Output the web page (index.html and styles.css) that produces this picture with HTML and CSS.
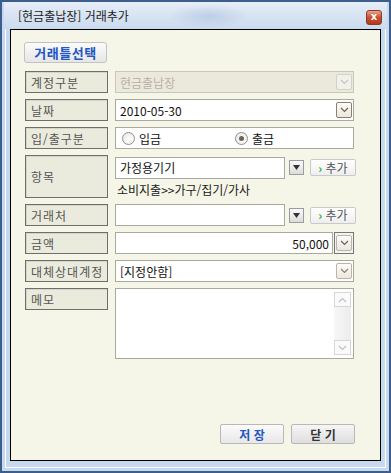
FILE: index.html
```
<!DOCTYPE html>
<html lang="ko">
<head>
    <meta charset="UTF-8">
    <title>거래추가</title>
    <link rel="stylesheet" href="styles.css">
</head>
<body>
    <div class="window">
        <div class="titlebar">
            <span class="title">[현금출납장] 거래추가</span>
            <span class="close">x</span>
        </div>
        <div class="client">
            <div class="top">
                <button class="btn-template">거래틀선택</button>
            </div>
            <div class="form">
                <div class="row">
                    <div class="label">계정구분</div>
                    <div class="field disabled">
                        <span class="value">현금출납장</span>
                        <span class="arrow light"><svg width="9" height="6" viewBox="0 0 9 6"><path d="M1 1 L4.5 4.5 L8 1" fill="none" stroke="#c4c4c4" stroke-width="1.2"/></svg></span>
                    </div>
                </div>
                <div class="row">
                    <div class="label">날짜</div>
                    <div class="field">
                        <span class="value">2010-05-30</span>
                        <span class="arrow dark"><svg width="9" height="6" viewBox="0 0 9 6"><path d="M1 1 L4.5 4.5 L8 1" fill="none" stroke="#6b6158" stroke-width="1.2"/></svg></span>
                    </div>
                </div>
                <div class="row">
                    <div class="label">입/출구분</div>
                    <div class="field radios">
                        <label class="radio"><span class="dot"></span>입금</label>
                        <label class="radio checked"><span class="dot"></span>출금</label>
                    </div>
                </div>
                <div class="row tall">
                    <div class="label center">항목</div>
                    <div class="stack">
                        <div class="line">
                            <div class="field short"><span class="value">가정용기기</span></div>
                            <span class="drop"><svg width="7" height="5" viewBox="0 0 7 5"><path d="M0 0 H7 L3.5 5 Z" fill="#333"/></svg></span>
                            <button class="btn-add"><span class="go">›</span> 추가</button>
                        </div>
                        <div class="path">소비지출&gt;&gt;가구/집기/가사</div>
                    </div>
                </div>
                <div class="row">
                    <div class="label">거래처</div>
                    <div class="line">
                        <div class="field short"></div>
                        <span class="drop"><svg width="7" height="5" viewBox="0 0 7 5"><path d="M0 0 H7 L3.5 5 Z" fill="#333"/></svg></span>
                        <button class="btn-add"><span class="go">›</span> 추가</button>
                    </div>
                </div>
                <div class="row">
                    <div class="label">금액</div>
                    <div class="line tight">
                        <div class="field amount"><span class="value">50,000</span></div>
                        <span class="calc"><span class="arrow light"><svg width="9" height="6" viewBox="0 0 9 6"><path d="M1 1 L4.5 4.5 L8 1" fill="none" stroke="#6b6158" stroke-width="1.2"/></svg></span></span>
                    </div>
                </div>
                <div class="row">
                    <div class="label">대체상대계정</div>
                    <div class="field">
                        <span class="value">[지정안함]</span>
                        <span class="arrow light"><svg width="9" height="6" viewBox="0 0 9 6"><path d="M1 1 L4.5 4.5 L8 1" fill="none" stroke="#8a8078" stroke-width="1.2"/></svg></span>
                    </div>
                </div>
                <div class="row memo">
                    <div class="label">메모</div>
                    <div class="field textarea">
                        <div class="scrollbar">
                            <span class="sb-btn"><svg width="9" height="6" viewBox="0 0 9 6"><path d="M1 5 L4.5 1.5 L8 5" fill="none" stroke="#c0c0c0" stroke-width="1.2"/></svg></span>
                            <span class="sb-btn"><svg width="9" height="6" viewBox="0 0 9 6"><path d="M1 1 L4.5 4.5 L8 1" fill="none" stroke="#c0c0c0" stroke-width="1.2"/></svg></span>
                        </div>
                    </div>
                </div>
            </div>
            <div class="actions">
                <button class="btn save">저 장</button>
                <button class="btn">닫 기</button>
            </div>
        </div>
    </div>
</body>
</html>
```
FILE: styles.css
```
body {
    margin: 0;
    font-family: "Noto Sans CJK KR", "Noto Sans", sans-serif;
    font-size: 12px;
    color: #111;
}
.window {
    box-sizing: border-box;
    width: 391px;
    height: 473px;
    display: flex;
    flex-direction: column;
    border: 2px solid #3d5d8d;
    padding: 0 8px 10px 8px;
    background: #c6d9ef;
    box-shadow: inset 0 0 0 3px #c6d9ef, inset 0 0 0 4px #fbfdff;
}
.titlebar {
    height: 27px;
    display: flex;
    align-items: center;
    margin: 0 -6px;
    padding: 0 5px 0 14px;
    background:
        radial-gradient(ellipse 40px 12px at 205px 14px, rgba(140, 165, 205, 0.35), transparent),
        linear-gradient(to bottom, #e6eef8, #cadaee);
}
.title {
    color: #1b1b1b;
    font-size: 12px;
}
.close {
    margin-left: auto;
    margin-top: 3px;
    width: 14px;
    height: 13px;
    border: 1px solid #8a3a2a;
    border-radius: 3px;
    background: linear-gradient(to bottom, #eba08a, #c9502f 50%, #b4391c);
    color: #fff;
    font: bold 10px/12px "DejaVu Sans", sans-serif;
    text-align: center;
}
.client {
    flex: 1;
    display: flex;
    flex-direction: column;
    border: 1px solid #000;
    background: #f5f6e7;
    padding: 12px 26px 16px 14px;
}
.top {
    margin-left: -1px;
}
.btn-template {
    height: 21px;
    width: 83px;
    padding: 0;
    border: 1px solid #c2c2c2;
    border-radius: 3px;
    background: linear-gradient(to bottom, #fbfbfb, #e6e6e6);
    color: #2356c4;
    font: bold 13px "Noto Sans CJK KR", sans-serif;
    letter-spacing: 0.5px;
}
.form {
    display: flex;
    flex-direction: column;
    gap: 6px;
    margin-top: 8px;
}
.row {
    display: flex;
    gap: 7px;
    height: 22px;
}
.row.tall {
    height: 43px;
}
.row.memo {
    height: 71px;
}
.label {
    box-sizing: border-box;
    width: 83px;
    height: 22px;
    flex-shrink: 0;
    display: flex;
    align-items: center;
    padding-left: 5px;
    border: 1px solid #6e6e6e;
    background: #ebebdd;
    box-shadow: inset 1px 1px 0 #d6d6c8;
    color: #555;
    letter-spacing: 1px;
}
.tall .label {
    height: 43px;
}
.field {
    box-sizing: border-box;
    flex: 1;
    height: 22px;
    display: flex;
    align-items: center;
    padding: 0 1px 0 4px;
    border: 1px solid #a9a99d;
    background: #fff;
}
.field.disabled {
    background: #ebe9dc;
    border-color: #c8c6b6;
    color: #b9b0a8;
}
.value {
    flex: 1;
}
.arrow {
    box-sizing: border-box;
    width: 16px;
    height: 16px;
    display: flex;
    align-items: center;
    justify-content: center;
    border: 1px solid #b9b5ad;
    border-radius: 2px;
    background: linear-gradient(to bottom, #fdfcfa, #ece7dd);
}
.arrow.dark {
    border-color: #8c7f72;
}
.disabled .arrow {
    border-color: #d4d2c8;
    background: #f2f1ea;
}
.radios {
    gap: 0;
    padding-left: 6px;
}
.radio {
    width: 113px;
    display: flex;
    align-items: center;
    gap: 4px;
}
.dot {
    box-sizing: border-box;
    width: 13px;
    height: 13px;
    border: 1px solid #8f8f8f;
    border-radius: 50%;
    background: radial-gradient(circle at 60% 60%, #fff, #e4e4de);
    display: flex;
    align-items: center;
    justify-content: center;
}
.checked .dot::after {
    content: "";
    width: 5px;
    height: 5px;
    border-radius: 50%;
    background: #6e6258;
}
.stack {
    flex: 1;
    display: flex;
    flex-direction: column;
}
.line {
    flex: 1;
    display: flex;
    align-items: center;
    gap: 4px;
    height: 22px;
}
.field.short {
    flex: none;
    width: 170px;
}
.drop {
    box-sizing: border-box;
    width: 15px;
    height: 15px;
    display: flex;
    align-items: center;
    justify-content: center;
    border: 1px solid #9c9c9c;
    background: linear-gradient(to bottom, #fafafa, #dcdcdc);
}
.btn-add {
    box-sizing: border-box;
    margin-left: 2px;
    width: 46px;
    height: 17px;
    padding: 0;
    border: 1px solid #c9c9c9;
    border-radius: 2px;
    background: linear-gradient(to bottom, #ffffff, #eeeeee);
    color: #555;
    font: 12px/14px "Noto Sans CJK KR", sans-serif;
}
.go {
    color: #22b032;
    font-weight: bold;
}
.path {
    padding: 1px 0 0 2px;
    color: #1a1a1a;
}
.line.tight {
    gap: 1px;
}
.field.amount {
    flex: 1;
    padding-right: 3px;
    text-align: right;
}
.calc {
    box-sizing: border-box;
    width: 20px;
    height: 22px;
    display: flex;
    align-items: center;
    justify-content: center;
    border: 1px solid #777;
    background: #f5f3ee;
}
.field.textarea {
    height: 71px;
    align-items: stretch;
    justify-content: flex-end;
    padding: 3px 2px;
}
.scrollbar {
    width: 17px;
    display: flex;
    flex-direction: column;
    justify-content: space-between;
    background: linear-gradient(to right, #f7f7f7, #ececec);
}
.sb-btn {
    box-sizing: border-box;
    height: 15px;
    display: flex;
    align-items: center;
    justify-content: center;
    border: 1px solid #d6d6d6;
    background: #fafafa;
}
.actions {
    margin-top: auto;
    display: flex;
    justify-content: flex-end;
    gap: 7px;
    margin-right: -1px;
}
.btn {
    width: 64px;
    height: 20px;
    padding: 0;
    border: 1px solid #b8b8b8;
    border-radius: 2px;
    background: linear-gradient(to bottom, #f6f6f6, #dedede);
    color: #333;
    font: bold 12px "Noto Sans CJK KR", sans-serif;
}
.btn.save {
    color: #2356c4;
    background: linear-gradient(to bottom, #fbfbfb, #e8e8e8);
}
```
